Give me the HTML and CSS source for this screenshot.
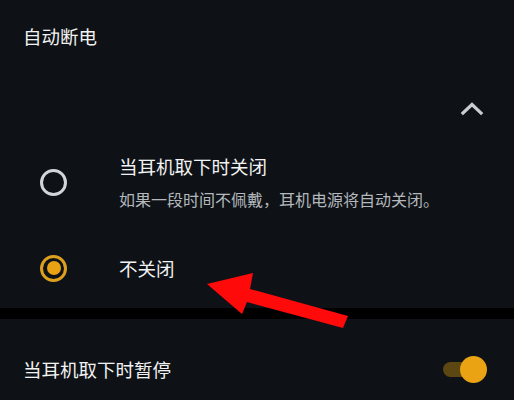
FILE: index.html
```html
<!DOCTYPE html>
<html lang="zh-CN">
<head>
<meta charset="utf-8">
<link rel="stylesheet" href="styles.css">
</head>
<body>
<div class="page">
  <div class="header"><span class="title">自动断电</span></div>
  <div class="collapse-row">
    <svg class="chevron" width="24" height="16" viewBox="0 0 24 16"><polyline points="3,13 12,4.5 21,13" fill="none" stroke="#c9cdd1" stroke-width="3.2" stroke-linecap="square"/></svg>
  </div>
  <div class="option option-first">
    <div class="radio"></div>
    <div class="opt-text">
      <div class="opt-title">当耳机取下时关闭</div>
      <div class="opt-sub">如果一段时间不佩戴，耳机电源将自动关闭。</div>
    </div>
  </div>
  <div class="option option-second">
    <div class="radio radio-on"><div class="dot"></div></div>
    <div class="opt-text">
      <div class="opt-title">不关闭</div>
    </div>
  </div>
  <div class="spacer"></div>
  <div class="band"></div>
  <div class="row">
    <span class="title">当耳机取下时暂停</span>
    <div class="toggle"><div class="track"></div><div class="knob"></div></div>
  </div>
  <svg class="arrow" width="514" height="400" viewBox="0 0 514 400"><polygon points="207,284 253,273 250,289 348,316 343,328 247,302 242,314" fill="#ff0a0a"/></svg>
</div>
</body>
</html>
```

FILE: styles.css
```css
html, body {
  margin: 0;
  padding: 0;
  background: #0e1217;
}
.page {
  position: relative;
  width: 514px;
  height: 400px;
  overflow: hidden;
  font-family: "Noto Sans CJK SC", "Noto Sans", sans-serif;
  color: #f2f2f2;
}
.header {
  height: 72px;
  display: flex;
  align-items: center;
  padding-left: 23px;
}
.title {
  font-size: 18.5px;
  line-height: 24px;
}
.collapse-row {
  height: 72px;
  display: flex;
  align-items: center;
  justify-content: flex-end;
  padding-right: 30px;
}
.chevron {
  display: block;
}
.option {
  display: flex;
  align-items: center;
  padding-left: 40px;
  box-sizing: border-box;
}
.option-first {
  height: 92px;
  padding-top: 10px;
  padding-bottom: 26px;
}
.option-second {
  height: 64px;
}
.radio {
  width: 27px;
  height: 27px;
  box-sizing: border-box;
  border: 3px solid #d2d6da;
  border-radius: 50%;
  flex: none;
  margin-right: 52px;
  display: flex;
  align-items: center;
  justify-content: center;
}
.radio-on {
  border-color: #dca01e;
}
.dot {
  width: 14px;
  height: 14px;
  border-radius: 50%;
  background: #e8a214;
}
.opt-text {
  display: flex;
  flex-direction: column;
  gap: 10px;
}
.opt-title {
  font-size: 18.5px;
  line-height: 24px;
  color: #f2f2f2;
}
.opt-sub {
  font-size: 16px;
  line-height: 22px;
  color: #b4b8bc;
}
.spacer {
  height: 8px;
}
.band {
  height: 11px;
  background: #000;
}
.row {
  height: 100px;
  display: flex;
  align-items: center;
  justify-content: space-between;
  padding: 0 27px 0 23px;
}
.toggle {
  position: relative;
  width: 44px;
  height: 27px;
}
.track {
  position: absolute;
  left: 0;
  top: 6px;
  width: 38px;
  height: 15px;
  border-radius: 8px;
  background: #5c4712;
}
.knob {
  position: absolute;
  right: 0;
  top: 0;
  width: 27px;
  height: 27px;
  border-radius: 50%;
  background: #e9a313;
}
.arrow {
  position: absolute;
  left: 0;
  top: 0;
}
```
